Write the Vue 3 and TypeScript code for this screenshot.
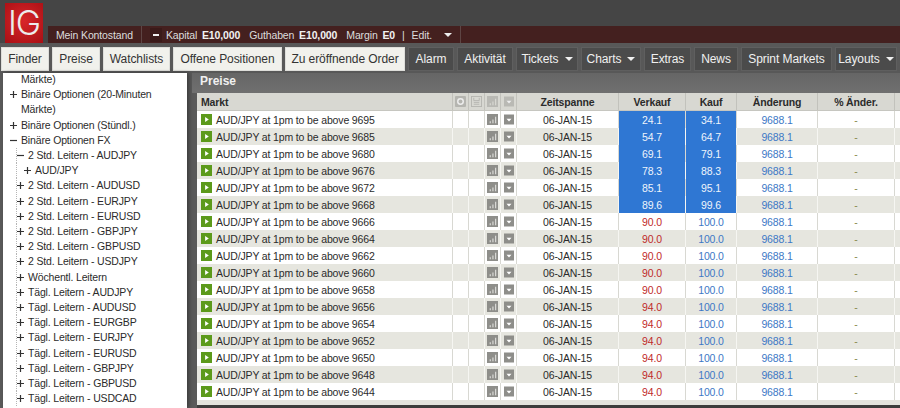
<script setup lang="ts">
interface Tab { label: string; light?: boolean; caret?: boolean; width: number }
interface TreeItem { text: string; level: number; mark?: 'plus' | 'minus' }
interface Row { level: number; sell: string; buy: string; hot: boolean }

const tabs: Tab[] = [
  { label: 'Finder', light: true, width: 48 },
  { label: 'Preise', light: true, width: 48 },
  { label: 'Watchlists', light: true, width: 67 },
  { label: 'Offene Positionen', light: true, width: 109 },
  { label: 'Zu eröffnende Order', light: true, width: 120 },
  { label: 'Alarm', width: 46 },
  { label: 'Aktivität', width: 56 },
  { label: 'Tickets', caret: true, width: 62 },
  { label: 'Charts', caret: true, width: 60 },
  { label: 'Extras', width: 47 },
  { label: 'News', width: 44 },
  { label: 'Sprint Markets', width: 91 },
  { label: 'Layouts', caret: true, width: 62 }
]

const tree: TreeItem[] = [
  { text: 'Märkte)', level: 0 },
  { text: 'Binäre Optionen (20-Minuten Märkte)', level: 0, mark: 'plus' },
  { text: 'Binäre Optionen (Stündl.)', level: 0, mark: 'plus' },
  { text: 'Binäre Optionen FX', level: 0, mark: 'minus' },
  { text: '2 Std. Leitern - AUDJPY', level: 1, mark: 'minus' },
  { text: 'AUD/JPY', level: 2, mark: 'plus' },
  { text: '2 Std. Leitern - AUDUSD', level: 1, mark: 'plus' },
  { text: '2 Std. Leitern - EURJPY', level: 1, mark: 'plus' },
  { text: '2 Std. Leitern - EURUSD', level: 1, mark: 'plus' },
  { text: '2 Std. Leitern - GBPJPY', level: 1, mark: 'plus' },
  { text: '2 Std. Leitern - GBPUSD', level: 1, mark: 'plus' },
  { text: '2 Std. Leitern - USDJPY', level: 1, mark: 'plus' },
  { text: 'Wöchentl. Leitern', level: 1, mark: 'plus' },
  { text: 'Tägl. Leitern - AUDJPY', level: 1, mark: 'plus' },
  { text: 'Tägl. Leitern - AUDUSD', level: 1, mark: 'plus' },
  { text: 'Tägl. Leitern - EURGBP', level: 1, mark: 'plus' },
  { text: 'Tägl. Leitern - EURJPY', level: 1, mark: 'plus' },
  { text: 'Tägl. Leitern - EURUSD', level: 1, mark: 'plus' },
  { text: 'Tägl. Leitern - GBPJPY', level: 1, mark: 'plus' },
  { text: 'Tägl. Leitern - GBPUSD', level: 1, mark: 'plus' },
  { text: 'Tägl. Leitern - USDCAD', level: 1, mark: 'plus' }
]

const rows: Row[] = [
  { level: 9695, sell: '24.1', buy: '34.1', hot: true },
  { level: 9685, sell: '54.7', buy: '64.7', hot: true },
  { level: 9680, sell: '69.1', buy: '79.1', hot: true },
  { level: 9676, sell: '78.3', buy: '88.3', hot: true },
  { level: 9672, sell: '85.1', buy: '95.1', hot: true },
  { level: 9668, sell: '89.6', buy: '99.6', hot: true },
  { level: 9666, sell: '90.0', buy: '100.0', hot: false },
  { level: 9664, sell: '90.0', buy: '100.0', hot: false },
  { level: 9662, sell: '90.0', buy: '100.0', hot: false },
  { level: 9660, sell: '90.0', buy: '100.0', hot: false },
  { level: 9658, sell: '90.0', buy: '100.0', hot: false },
  { level: 9656, sell: '94.0', buy: '100.0', hot: false },
  { level: 9654, sell: '94.0', buy: '100.0', hot: false },
  { level: 9652, sell: '94.0', buy: '100.0', hot: false },
  { level: 9650, sell: '94.0', buy: '100.0', hot: false },
  { level: 9648, sell: '94.0', buy: '100.0', hot: false },
  { level: 9644, sell: '94.0', buy: '100.0', hot: false }
]
</script>

<template>
  <div class="app">
    <header class="top">
      <div class="logo">IG</div>
      <div class="account">
        <span class="acc-title">Mein Kontostand</span>
        <span class="acc-sep"></span>
        <span class="acc-minus"><i></i></span>
        <span class="acc-item ml4">Kapital <b>E10,000</b></span>
        <span class="acc-item ml9">Guthaben <b>E10,000</b></span>
        <span class="acc-item ml9">Margin <b>E0</b></span>
        <span class="acc-item ml7">|</span>
        <span class="acc-item ml7">Edit.</span>
        <span class="caret small"></span>
        <span class="acc-sep end"></span>
      </div>
    </header>

    <nav class="tabs">
      <div
        v-for="tab in tabs"
        :key="tab.label"
        class="tab"
        :class="{ light: tab.light }"
        :style="{ width: tab.width + 'px' }"
      >
        {{ tab.label }}<span v-if="tab.caret" class="caret"></span>
      </div>
    </nav>

    <main class="body">
      <aside class="side">
        <div v-for="item in tree" :key="item.text" class="node" :class="'lv' + item.level">
          <svg v-if="item.mark" class="mark" width="7" height="7" viewBox="0 0 7 7">
            <path v-if="item.mark === 'plus'" d="M0 3.5h7M3.5 0v7" stroke="#333" stroke-width="1.2" />
            <path v-else d="M0 3.5h7" stroke="#333" stroke-width="1.2" />
          </svg>
          <span class="mark-gap" v-else></span>
          <span class="node-text">{{ item.text }}</span>
        </div>
      </aside>

      <section class="panel">
        <h2 class="panel-title">Preise</h2>
        <div class="table">
          <div class="row head">
            <div class="cell market">Markt</div>
            <div class="cell ic">
              <svg width="11" height="11" viewBox="0 0 12 12">
                <rect width="12" height="12" rx="1" fill="#b5b5b0" />
                <circle cx="6" cy="6" r="3" fill="none" stroke="#eee" stroke-width="1.6" />
              </svg>
            </div>
            <div class="cell ic">
              <svg width="11" height="11" viewBox="0 0 12 12">
                <rect x=".5" y=".5" width="11" height="11" fill="none" stroke="#b5b5b0" />
                <path d="M3 2v3h6V2M3 7h6M3 9h6" fill="none" stroke="#b5b5b0" />
              </svg>
            </div>
            <div class="cell ic">
              <svg width="11" height="11" viewBox="0 0 12 12">
                <rect width="12" height="12" fill="#b9b9b4" />
                <path d="M3 8h1v2H3zM6 6h1v4H6zM9 3h1v7H9z" fill="#e2e2dc" />
              </svg>
            </div>
            <div class="cell ic">
              <svg width="10" height="11" viewBox="0 0 12 12">
                <rect width="12" height="12" fill="#b9b9b4" />
                <path d="M3 5h6L6 8.5z" fill="#eee" />
              </svg>
            </div>
            <div class="cell num time">Zeitspanne</div>
            <div class="cell num sell">Verkauf</div>
            <div class="cell num buy">Kauf</div>
            <div class="cell num chg">Änderung</div>
            <div class="cell num pct">% Änder.</div>
            <div class="cell last"></div>
          </div>
          <div v-for="row in rows" :key="row.level" class="row item">
            <div class="cell market">
              <svg class="go" width="11" height="11" viewBox="0 0 12 12">
                <rect width="12" height="12" fill="#5c9a1b" />
                <path d="M4.5 3.2 8.5 6l-4 2.8z" fill="#fff" />
              </svg>
              AUD/JPY at 1pm to be above {{ row.level }}
            </div>
            <div class="cell ic"></div>
            <div class="cell ic"></div>
            <div class="cell ic">
              <svg width="11" height="11" viewBox="0 0 12 12">
                <rect width="12" height="12" fill="#8e8e8a" />
                <path d="M3 8h1v2H3zM6 6h1v4H6zM9 3h1v7H9z" fill="#f1f1ee" />
              </svg>
            </div>
            <div class="cell ic">
              <svg width="10" height="11" viewBox="0 0 12 12">
                <rect width="12" height="12" fill="#8e8e8a" />
                <path d="M3 5h6L6 8.5z" fill="#fff" />
              </svg>
            </div>
            <div class="cell num time">06-JAN-15</div>
            <div class="cell num sell" :class="row.hot ? 'hot' : 'red'">{{ row.sell }}</div>
            <div class="cell num buy" :class="row.hot ? 'hot' : 'blue'">{{ row.buy }}</div>
            <div class="cell num chg blue">9688.1</div>
            <div class="cell num pct dash">-</div>
            <div class="cell last"></div>
          </div>
        </div>
      </section>
    </main>
  </div>
</template>

<style scoped>
.app {
  width: 900px;
  height: 408px;
  overflow: hidden;
  display: flex;
  flex-direction: column;
  background: #505050;
  font-family: "Liberation Sans", Arial, sans-serif;
  color: #222;
}
.top {
  height: 43px;
  display: flex;
  align-items: flex-end;
  background: #454545;
  flex-shrink: 0;
}
.logo {
  width: 38px;
  height: 40px;
  margin-left: 5px;
  margin-right: 5px;
  background: radial-gradient(circle at 50% 45%, #d8262a, #a80f14);
  color: #ececec;
  font-family: "Inter", "Liberation Sans", sans-serif;
  font-size: 34px;
  font-weight: 300;
  line-height: 40px;
  text-align: center;
  letter-spacing: -1px;
}
.account {
  flex: 1;
  height: 17px;
  display: flex;
  align-items: center;
  background: #44201f;
  color: #ddd;
  font-size: 10.5px;
  letter-spacing: -0.13px;
  padding-left: 8px;
}
.account b {
  color: #f2f2f2;
  margin-left: 2px;
}
.acc-title {
  width: 85px;
}
.acc-sep {
  width: 1px;
  height: 17px;
  background: #5e4544;
}
.acc-sep.end {
  margin-left: 8px;
}
.acc-minus {
  width: 12px;
  height: 14px;
  margin-left: 8px;
  background: #3a1a19;
  display: flex;
  align-items: center;
  justify-content: center;
}
.acc-minus i {
  width: 6px;
  height: 2px;
  background: #eee;
}
.ml4 { margin-left: 4px; }
.ml7 { margin-left: 7px; }
.ml9 { margin-left: 9px; }
.caret {
  display: inline-block;
  width: 0;
  height: 0;
  margin-left: 6px;
  border-left: 4px solid transparent;
  border-right: 4px solid transparent;
  border-top: 4px solid currentColor;
  vertical-align: 2px;
}
.caret.small {
  margin-left: 12px;
  border-top-color: #eee;
}
.tabs {
  height: 30px;
  flex-shrink: 0;
  display: flex;
  gap: 3px;
  padding: 4px 0 0 1px;
  box-sizing: border-box;
  background: #585858;
}
.tab {
  height: 24px;
  box-sizing: border-box;
  flex-shrink: 0;
  line-height: 23px;
  text-align: center;
  font-size: 12px;
  letter-spacing: -0.07px;
  white-space: nowrap;
  color: #f0f0f0;
  background: #4b4b4b;
  border: 1px solid #5f5f5f;
}
.tab.light {
  background: #f1f1ec;
  color: #333;
  border-color: #dededa;
}
.body {
  flex: 1;
  min-height: 0;
  display: flex;
  background: #5a5a5a;
}
.side {
  width: 184px;
  margin-left: 3px;
  flex-shrink: 0;
  background: #fff;
  box-shadow: 2px 0 4px rgba(0, 0, 0, 0.35);
  font-size: 10.5px;
  letter-spacing: -0.16px;
  line-height: 15.2px;
  color: #2b2b2b;
  overflow: hidden;
}
.node {
  display: flex;
  align-items: flex-start;
}
.node:first-child {
  margin-top: -1px;
}
.lv0 { padding-left: 7px; }
.lv1,
.lv2 {
  background: linear-gradient(#b5b5b5 50%, transparent 50%) 13px 0 / 1px 2px repeat-y;
}
.lv1 { padding-left: 14px; }
.lv2 { padding-left: 21px; }
.mark {
  margin-top: 4px;
  margin-right: 4px;
  flex-shrink: 0;
}
.mark-gap {
  width: 11px;
  flex-shrink: 0;
}
.node-text {
  min-width: 0;
}
.panel {
  width: 703px;
  margin-left: 10px;
  flex-shrink: 0;
  background: #3d3d3d;
}
.panel-title {
  margin: 0 0 0 -5px;
  height: 20px;
  box-sizing: border-box;
  padding: 1px 0 0 8px;
  font-size: 12px;
  line-height: 15px;
  font-weight: 700;
  color: #f0f0f0;
  background: linear-gradient(#666, #707070);
}
.table {
  background: #e4e4de;
  height: 312px;
}
.row {
  display: flex;
  font-size: 10.5px;
  letter-spacing: -0.15px;
}
.head {
  height: 18px;
  background: #d8d8d2;
  font-weight: 700;
  color: #2b2b2b;
  border-bottom: 1px solid #c6c6c0;
  box-sizing: border-box;
}
.item {
  height: 17px;
  background: #fff;
  color: #2b2b2b;
}
.item:nth-child(odd) {
  background: #e6e6df;
}
.cell {
  display: flex;
  align-items: center;
  flex-shrink: 0;
  box-sizing: border-box;
  border-right: 1px solid #d8d8d2;
  white-space: nowrap;
}
.head .cell {
  border-right-color: #c2c2bc;
}
.item:nth-child(odd) .cell {
  border-right-color: #f6f6f2;
}
.market {
  width: 256px;
  padding-left: 4px;
}
.go {
  margin-right: 4px;
}
.ic {
  width: 16px;
  justify-content: center;
}
.num {
  justify-content: center;
}
.time { width: 102px; }
.sell { width: 67px; }
.buy { width: 51px; }
.chg { width: 81px; }
.pct { width: 77px; }
.last { width: 5px; border-right: 0; }
.hot {
  background: #2f77d3;
  color: #eef4fb;
}
.red { color: #bf2a2a; }
.blue { color: #3d78c6; }
.dash { color: #8a8a50; }
</style>

<style>
html,
body {
  margin: 0;
  overflow: hidden;
}
</style>
